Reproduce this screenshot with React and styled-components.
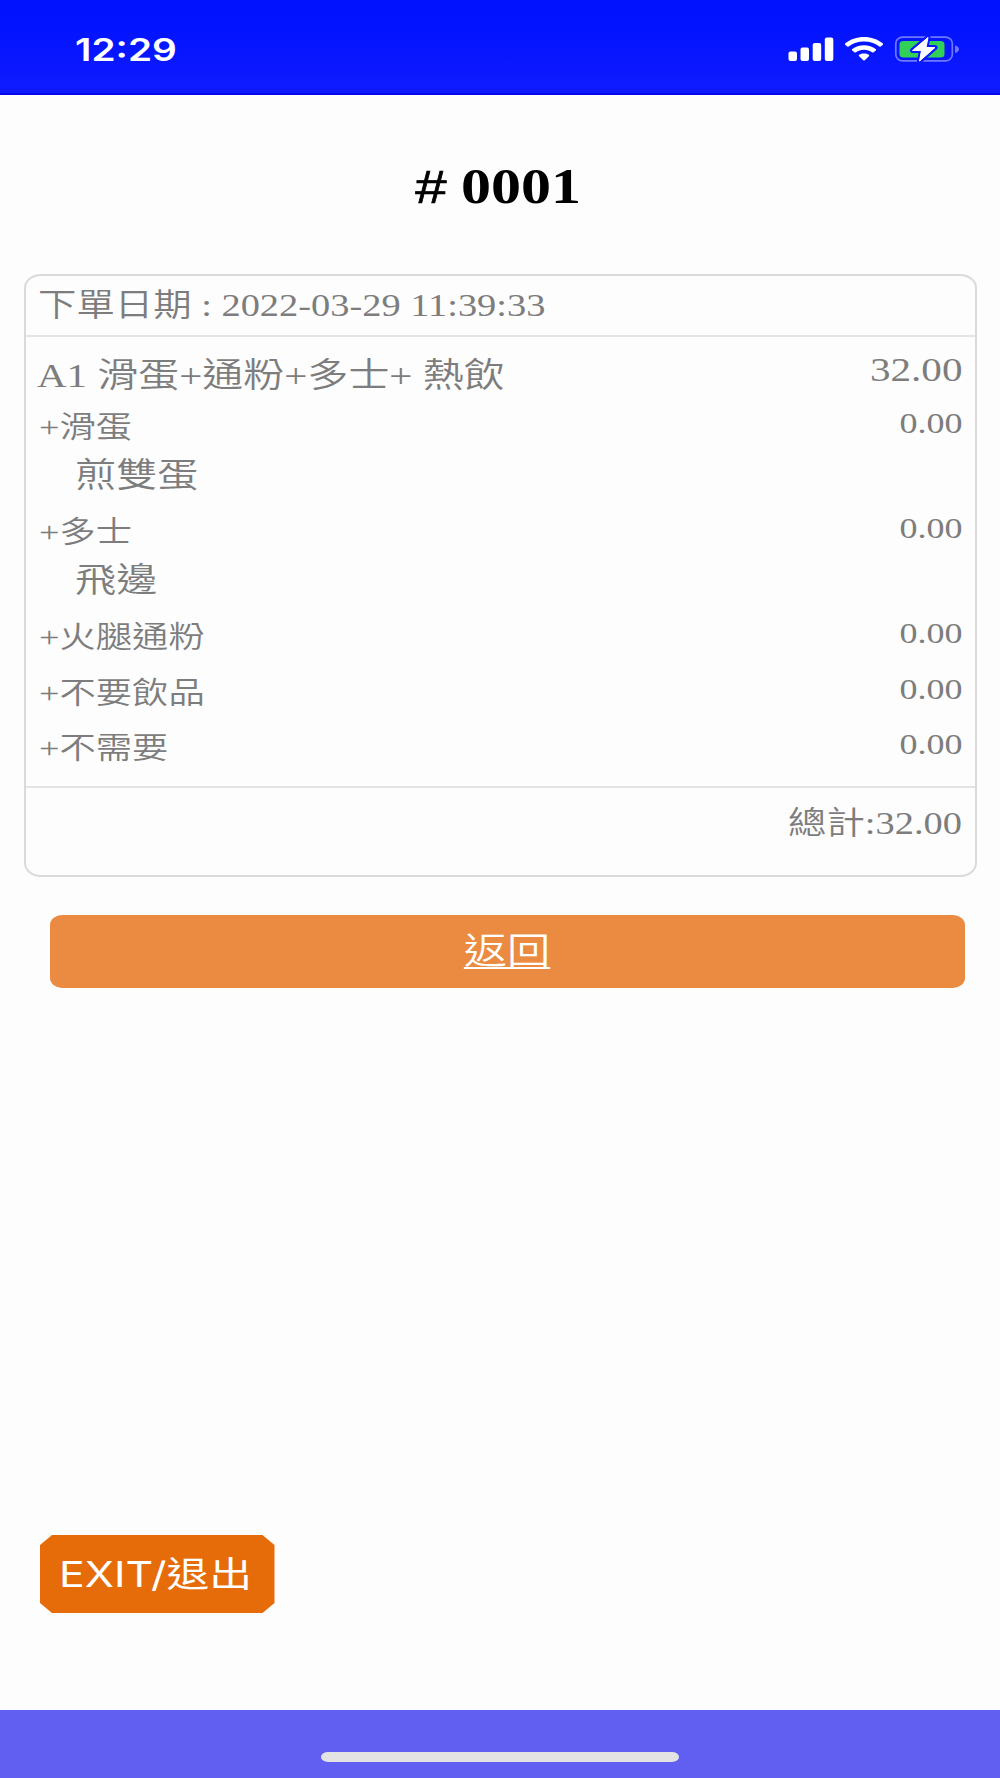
import styled, { createGlobalStyle } from 'styled-components';

const GlobalStyle = createGlobalStyle`
  * {
    box-sizing: border-box;
  }
  body {
    margin: 0;
    background: #fdfdfd;
  }
`;

const Screen = styled.div`
  display: flex;
  flex-direction: column;
  width: 1000px;
  height: 1778px;
  background: #fdfdfd;
  color: #7d7d7d;
  font-family: 'Liberation Serif', 'Noto Sans CJK TC', serif;
  font-weight: 350;
`;

const StatusBar = styled.div`
  display: flex;
  justify-content: space-between;
  align-items: center;
  height: 95px;
  padding: 3px 40px 0 75px;
  background: linear-gradient(#0012ff 15%, #101bff);
  box-shadow: inset 0 -2px 0 #0606ee;
`;

const Text = styled.span`
  display: inline-block;
  white-space: pre;
  transform: scaleX(${({ $stretch }) => $stretch || 1.2});
  transform-origin: ${({ $origin }) => $origin || 'left'} center;
`;

const Clock = styled(Text)`
  color: #fff;
  font: 600 31px Inter, sans-serif;
`;

const Title = styled.h1`
  display: flex;
  justify-content: center;
  height: 179px;
  margin: 0;
  padding-right: 3px;
  color: #000;
  font-size: 50px;
  line-height: 182px;
`;

const Hash = styled.span`
  margin-right: 13px;
  font-family: 'Liberation Sans', sans-serif;
  font-size: 47px;
  font-weight: 400;
  letter-spacing: -1px;
  -webkit-text-stroke: 0.7px #000;
`;

const Card = styled.section`
  width: 953px;
  height: 603px;
  margin-left: 24px;
  border: 2px solid #dadada;
  border-radius: 17px / 14px;
`;

const CardHeader = styled.div`
  height: 61px;
  padding-left: 12px;
  border-bottom: 2px solid #e4e4e4;
  font-size: 32px;
  line-height: 58px;
`;

const CardBody = styled.div`
  height: 451px;
  padding: 19px 13px 0 11px;
  border-bottom: 2px solid #e4e4e4;
`;

const CardFooter = styled.div`
  padding-right: 13px;
  font-size: 32px;
  line-height: 70px;
  text-align: right;
`;

const ItemRow = styled.div`
  display: flex;
  justify-content: space-between;
  height: 47px;
  font-size: 34px;
  line-height: 40px;
`;

const ItemPrice = styled(Text)`
  line-height: 28px;
`;

const Extra = styled.div`
  padding: 0 0 ${({ $hasOption }) => ($hasOption ? '6px' : '7.5px')} 2px;
`;

const ExtraRow = styled.div`
  display: flex;
  justify-content: space-between;
  height: 48px;
  font-size: 30px;
  line-height: 48px;
`;

const ExtraPrice = styled(Text)`
  line-height: 39px;
`;

const Option = styled.div`
  height: 51px;
  padding-left: 36px;
  font-size: 34px;
  line-height: 50px;
`;

const BackButton = styled.a`
  width: 915.5px;
  height: 73px;
  margin: 38px 0 0 49.5px;
  border-radius: 12px / 10px;
  background: #ea8b41;
  color: #fff;
  font-size: 36px;
  line-height: 75px;
  text-align: center;
`;

const BackLabel = styled(Text)`
  text-decoration: underline;
  text-decoration-thickness: 2px;
  text-underline-offset: 3px;
`;

const ExitButton = styled.button`
  width: 234.5px;
  height: 78px;
  margin: auto 0 97px 40px;
  padding: 0 0 0 19px;
  border: 0;
  background: #e66c09;
  clip-path: polygon(
    12px 0, calc(100% - 12px) 0, 100% 10px, 100% calc(100% - 10px),
    calc(100% - 12px) 100%, 12px 100%, 0 calc(100% - 10px), 0 10px
  );
  color: #fff;
  font: 35px Inter, 'Noto Sans CJK TC', sans-serif;
  line-height: 76px;
  text-align: left;
`;

const HomeBar = styled.div`
  display: flex;
  justify-content: center;
  height: 68px;
  padding-top: 42px;
  background: #605ff1;
`;

const HomeIndicator = styled.div`
  width: 358px;
  height: 10px;
  border-radius: 7px / 5px;
  background: #e3e3e3;
`;

const StatusIcons = () => (
  <svg width="172" height="28" viewBox="788 35 172 28">
    <g fill="#fff">
      <rect x="788.5" y="51.5" width="8.500" height="9.5" rx="2" />
      <rect x="800.5" y="47.5" width="8.500" height="13.5" rx="2" />
      <rect x="812.7" y="43" width="8.500" height="18" rx="2" />
      <rect x="824.8" y="37.5" width="8.500" height="23.5" rx="2" />
      <path d="M864 37c7.200 0 13.800 2.300 18.700 6.300.5.400.5 1 .1 1.400l-2 1.700c-.5.400-1 .4-1.500 0-4.200-3.200-9.500-5-15.300-5s-11.100 1.800-15.300 5c-.5.400-1 .4-1.500 0l-2-1.700c-.4-.4-.4-1 .1-1.400C850.200 39.300 856.800 37 864 37z" />
      <path d="M864 45.300c4.500 0 8.600 1.400 11.700 3.700.6.400.6 1 .1 1.400l-2.200 1.800c-.4.400-1 .4-1.500 0-2.200-1.600-5-2.500-8.100-2.500s-5.900.9-8.100 2.500c-.5.400-1.100.4-1.500 0l-2.200-1.800c-.5-.4-.5-1 .1-1.400 3.100-2.300 7.200-3.700 11.700-3.700z" />
      <path d="M864 53.500c1.900 0 3.500.5 4.800 1.300.6.400.6 1 .1 1.400l-4.200 4c-.4.400-1 .4-1.400 0l-4.200-4c-.5-.4-.5-1 .1-1.400 1.300-.8 2.900-1.300 4.800-1.300z" />
    </g>
    <rect x="895.8" y="37.200" width="56.500" height="23.600" rx="7" ry="6" fill="none" stroke="#7078ff" strokeWidth="1.700" />
    <path d="M955 45.500c2.500.5 4 2 4 3.700s-1.500 3.200-4 3.700z" fill="#7078ff" />
    <rect x="899.5" y="41" width="45" height="16.500" rx="4" ry="3.500" fill="#31d158" />
    <path
      d="M928 37.500 L912.500 50.500 H921.500 L919.500 61 L935 47.500 H926 Z"
      fill="#fff"
      stroke="#0c17ff"
      strokeWidth="5"
      strokeLinejoin="round"
      paintOrder="stroke"
    />
    <path
      d="M928 37.500 L912.500 50.500 H921.500 L919.500 61 L935 47.500 H926 Z"
      fill="#fff"
      stroke="#fff"
      strokeLinejoin="round"
    />
  </svg>
);

const extras = [
  { name: '滑蛋', price: '0.00', option: '煎雙蛋' },
  { name: '多士', price: '0.00', option: '飛邊' },
  { name: '火腿通粉', price: '0.00' },
  { name: '不要飲品', price: '0.00' },
  { name: '不需要', price: '0.00' },
];

const App = () => (
  <Screen>
    <GlobalStyle />
    <StatusBar>
      <Clock $stretch={1.25}>12:29</Clock>
      <StatusIcons />
    </StatusBar>
    <Title>
      <Text $origin="center">
        <Hash>#</Hash>0001
      </Text>
    </Title>
    <Card>
      <CardHeader>
        <Text>下單日期 : 2022-03-29 11:39:33</Text>
      </CardHeader>
      <CardBody>
        <ItemRow>
          <Text $stretch={1.205}>A1 滑蛋+通粉+多士+ 熱飲</Text>
          <ItemPrice $origin="right" $stretch={1.21}>32.00</ItemPrice>
        </ItemRow>
        {extras.map(({ name, price, option }) => (
          <Extra key={name} $hasOption={Boolean(option)}>
            <ExtraRow>
              <Text $stretch={1.21}>+{name}</Text>
              <ExtraPrice $origin="right">{price}</ExtraPrice>
            </ExtraRow>
            {option ? (
              <Option>
                <Text $stretch={1.21}>{option}</Text>
              </Option>
            ) : null}
          </Extra>
        ))}
      </CardBody>
      <CardFooter>
        <Text $origin="right">總計:32.00</Text>
      </CardFooter>
    </Card>
    <BackButton href="#">
      <BackLabel $origin="center">返回</BackLabel>
    </BackButton>
    <ExitButton>
      <Text $stretch={1.225}>EXIT/退出</Text>
    </ExitButton>
    <HomeBar>
      <HomeIndicator />
    </HomeBar>
  </Screen>
);

export default App;
